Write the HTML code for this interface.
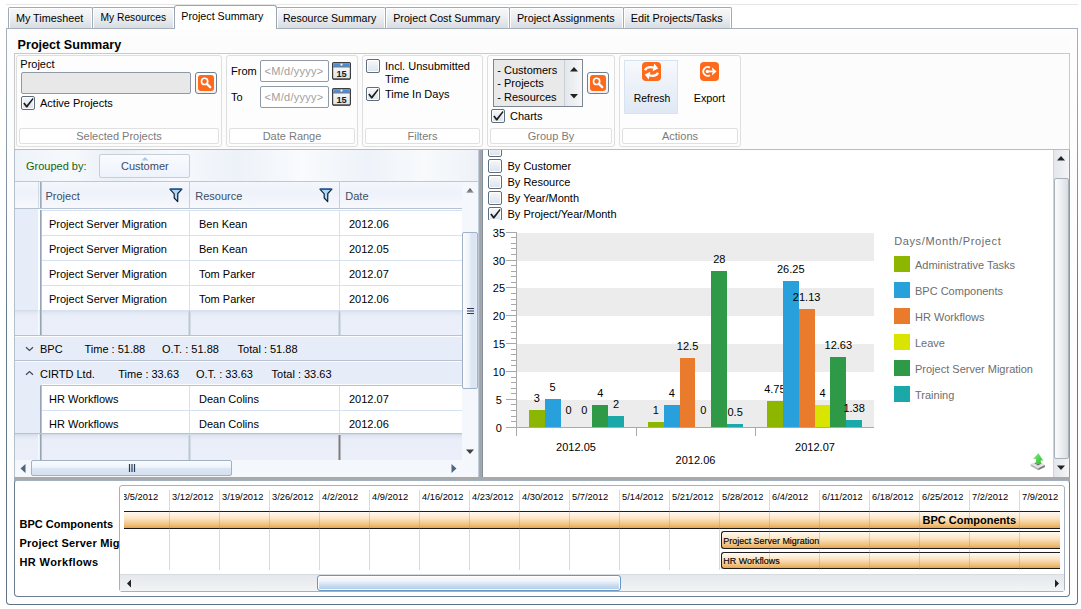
<!DOCTYPE html>
<html><head><meta charset="utf-8">
<style>
html,body{margin:0;padding:0;}
body{width:1081px;height:609px;overflow:hidden;background:#fff;position:relative;font-family:"Liberation Sans",sans-serif;font-size:11px;}
.a{position:absolute;box-sizing:border-box;}
.t{white-space:nowrap;}
</style></head><body>
<div class="a " style="left:6px;top:4px;width:1072px;height:1px;background:#e6e6e6;"></div>
<div class="a " style="left:6px;top:28px;width:1072px;height:577px;border-radius:0 0 4px 4px;background:linear-gradient(#a8b2bc,#8d9bab 20%,#65788a 50%,#5f7384);"></div>
<div class="a " style="left:7px;top:29px;width:1070px;height:575px;border-radius:0 0 3px 3px;background:#fdfdfd;"></div>
<div class="a " style="left:14px;top:36px;width:1056px;height:113px;background:#fcfcfc;"></div>
<div class="a " style="left:8px;top:7px;width:85px;height:22px;border:1px solid #a0aab4;border-bottom:none;border-radius:2px 2px 0 0;background:linear-gradient(#f7f8f9,#eceef1 45%,#d6dbe1);box-shadow:inset 1px 1px 0 #fff,inset -1px 0 0 #fff;"></div>
<div class="a t " style="left:15.90px;top:12.84px;font-size:10.82px;line-height:10.82px;color:#000;font-weight:normal;">My Timesheet</div>
<div class="a " style="left:92px;top:7px;width:83px;height:22px;border:1px solid #a0aab4;border-bottom:none;border-radius:2px 2px 0 0;background:linear-gradient(#f7f8f9,#eceef1 45%,#d6dbe1);box-shadow:inset 1px 1px 0 #fff,inset -1px 0 0 #fff;"></div>
<div class="a t " style="left:100.50px;top:13.31px;font-size:10.26px;line-height:10.26px;color:#000;font-weight:normal;">My Resources</div>
<div class="a " style="left:276px;top:7px;width:110px;height:22px;border:1px solid #a0aab4;border-bottom:none;border-radius:2px 2px 0 0;background:linear-gradient(#f7f8f9,#eceef1 45%,#d6dbe1);box-shadow:inset 1px 1px 0 #fff,inset -1px 0 0 #fff;"></div>
<div class="a t " style="left:282.90px;top:13.05px;font-size:10.57px;line-height:10.57px;color:#000;font-weight:normal;">Resource Summary</div>
<div class="a " style="left:385px;top:7px;width:125px;height:22px;border:1px solid #a0aab4;border-bottom:none;border-radius:2px 2px 0 0;background:linear-gradient(#f7f8f9,#eceef1 45%,#d6dbe1);box-shadow:inset 1px 1px 0 #fff,inset -1px 0 0 #fff;"></div>
<div class="a t " style="left:393.20px;top:12.95px;font-size:10.69px;line-height:10.69px;color:#000;font-weight:normal;">Project Cost Summary</div>
<div class="a " style="left:509px;top:7px;width:115px;height:22px;border:1px solid #a0aab4;border-bottom:none;border-radius:2px 2px 0 0;background:linear-gradient(#f7f8f9,#eceef1 45%,#d6dbe1);box-shadow:inset 1px 1px 0 #fff,inset -1px 0 0 #fff;"></div>
<div class="a t " style="left:516.90px;top:12.87px;font-size:10.79px;line-height:10.79px;color:#000;font-weight:normal;">Project Assignments</div>
<div class="a " style="left:623px;top:7px;width:109px;height:22px;border:1px solid #a0aab4;border-bottom:none;border-radius:2px 2px 0 0;background:linear-gradient(#f7f8f9,#eceef1 45%,#d6dbe1);box-shadow:inset 1px 1px 0 #fff,inset -1px 0 0 #fff;"></div>
<div class="a t " style="left:630.80px;top:12.78px;font-size:10.89px;line-height:10.89px;color:#000;font-weight:normal;">Edit Projects/Tasks</div>
<div class="a " style="left:174px;top:5px;width:103px;height:24px;border:1px solid #9aa5b1;border-bottom:none;border-radius:3px 3px 0 0;background:#fff;"></div>
<div class="a t " style="left:181.30px;top:10.93px;font-size:10.71px;line-height:10.71px;color:#000;font-weight:normal;">Project Summary</div>
<div class="a " style="left:6px;top:28px;width:1072px;height:1px;background:#a6b0ba;"></div>
<div class="a " style="left:175px;top:28px;width:101px;height:1px;background:#fff;"></div>
<div class="a t " style="left:17.60px;top:38.73px;font-size:12.6px;line-height:12.6px;color:#000;font-weight:bold;">Project Summary</div>
<div class="a " style="left:14px;top:53px;width:1056px;height:96px;border:1px solid #c9c9c9;border-bottom:none;background:#fcfcfc;"></div>
<div class="a " style="left:16px;top:55px;width:206px;height:92px;border:1px solid #dedede;border-radius:3px;background:#fdfdfd;"></div>
<div class="a " style="left:19px;top:128px;width:200px;height:16px;border:1px solid #e0e0e0;border-radius:2px;background:#fff;"></div>
<div class="a t" style="left:19.00px;width:200px;text-align:center;top:130.69px;font-size:11px;line-height:11px;color:#7b7b7b;font-weight:normal;">Selected Projects</div>
<div class="a " style="left:226px;top:55px;width:132px;height:92px;border:1px solid #dedede;border-radius:3px;background:#fdfdfd;"></div>
<div class="a " style="left:229px;top:128px;width:126px;height:16px;border:1px solid #e0e0e0;border-radius:2px;background:#fff;"></div>
<div class="a t" style="left:192.00px;width:200px;text-align:center;top:130.69px;font-size:11px;line-height:11px;color:#7b7b7b;font-weight:normal;">Date Range</div>
<div class="a " style="left:362px;top:55px;width:121px;height:92px;border:1px solid #dedede;border-radius:3px;background:#fdfdfd;"></div>
<div class="a " style="left:365px;top:128px;width:115px;height:16px;border:1px solid #e0e0e0;border-radius:2px;background:#fff;"></div>
<div class="a t" style="left:322.50px;width:200px;text-align:center;top:130.69px;font-size:11px;line-height:11px;color:#7b7b7b;font-weight:normal;">Filters</div>
<div class="a " style="left:487px;top:55px;width:128px;height:92px;border:1px solid #dedede;border-radius:3px;background:#fdfdfd;"></div>
<div class="a " style="left:490px;top:128px;width:122px;height:16px;border:1px solid #e0e0e0;border-radius:2px;background:#fff;"></div>
<div class="a t" style="left:451.00px;width:200px;text-align:center;top:130.69px;font-size:11px;line-height:11px;color:#7b7b7b;font-weight:normal;">Group By</div>
<div class="a " style="left:619px;top:55px;width:122px;height:92px;border:1px solid #dedede;border-radius:3px;background:#fdfdfd;"></div>
<div class="a " style="left:622px;top:128px;width:116px;height:16px;border:1px solid #e0e0e0;border-radius:2px;background:#fff;"></div>
<div class="a t" style="left:580.00px;width:200px;text-align:center;top:130.69px;font-size:11px;line-height:11px;color:#7b7b7b;font-weight:normal;">Actions</div>
<div class="a t " style="left:20.30px;top:59.29px;font-size:11px;line-height:11px;color:#000;font-weight:normal;">Project</div>
<div class="a " style="left:21px;top:72px;width:170px;height:22px;border:1px solid #8e9aa8;border-radius:2px;background:#e8e8e8;"></div>
<div class="a " style="left:195px;top:72px;width:22px;height:22px;border:1px solid #6e7f90;border-radius:3px;background:linear-gradient(#fff,#eef1f4);"><svg width="16" height="16" style="position:absolute;left:2px;top:2px"><rect x="0" y="0" width="16" height="16" rx="3" fill="#fd6a1c"/><circle cx="6.6" cy="6.4" r="3.1" fill="none" stroke="#fff" stroke-width="1.6"/><path d="M8.8 8.7 L12.2 12.1" stroke="#fff" stroke-width="2.3" stroke-linecap="round"/></svg></div>
<div class="a " style="left:21px;top:96px;width:14px;height:14px;border:1px solid #5f6d7c;border-radius:2px;background:linear-gradient(#f6f8fa,#dbe3ec);box-shadow:inset 0 0 0 1px #fff;"><svg width="14" height="14" style="position:absolute;left:-1px;top:-1px"><path d="M2.2 7.6 L3.6 6.6 L5.7 9.2 L11.6 2.1 L12.6 2.9 L6.3 11.4 L5.2 11.4Z" fill="#1e1e1e"/></svg></div>
<div class="a t " style="left:40.00px;top:97.69px;font-size:11px;line-height:11px;color:#000;font-weight:normal;">Active Projects</div>
<div class="a t " style="left:231.00px;top:66.19px;font-size:11px;line-height:11px;color:#000;font-weight:normal;">From</div>
<div class="a t " style="left:231.00px;top:91.69px;font-size:11px;line-height:11px;color:#000;font-weight:normal;">To</div>
<div class="a " style="left:260px;top:60px;width:69px;height:22px;border:1px solid #8e9aa8;border-radius:2px;background:#fff;"></div>
<div class="a t " style="left:264.50px;top:66.19px;font-size:11px;line-height:11px;color:#a0a0a0;font-weight:normal;letter-spacing:0.28px;">&lt;M/d/yyyy&gt;</div>
<div class="a " style="left:332px;top:62px;width:19px;height:18px;"><svg width="19" height="18" style="position:absolute;left:0;top:0"><defs><linearGradient id="cg" x1="0" y1="0" x2="0" y2="1"><stop offset="0" stop-color="#fff"/><stop offset="1" stop-color="#dfe3e8"/></linearGradient></defs><rect x="0.6" y="0.6" width="17.8" height="16.4" rx="1" fill="url(#cg)" stroke="#3d3d3d" stroke-width="1.2"/><rect x="1.2" y="1.2" width="16.6" height="3.6" fill="#4d8fd6"/><rect x="1" y="4.6" width="17" height="0.8" fill="#555"/><circle cx="9.5" cy="2.6" r="1.1" fill="#fff"/><path d="M1 17.2 H18" stroke="#333" stroke-width="1"/><text x="9.6" y="14.9" font-size="9.2" font-weight="bold" font-family="Liberation Sans" text-anchor="middle" fill="#1a1a1a">15</text></svg></div>
<div class="a " style="left:260px;top:86px;width:69px;height:22px;border:1px solid #8e9aa8;border-radius:2px;background:#fff;"></div>
<div class="a t " style="left:264.50px;top:92.19px;font-size:11px;line-height:11px;color:#a0a0a0;font-weight:normal;letter-spacing:0.28px;">&lt;M/d/yyyy&gt;</div>
<div class="a " style="left:332px;top:88px;width:19px;height:18px;"><svg width="19" height="18" style="position:absolute;left:0;top:0"><defs><linearGradient id="cg" x1="0" y1="0" x2="0" y2="1"><stop offset="0" stop-color="#fff"/><stop offset="1" stop-color="#dfe3e8"/></linearGradient></defs><rect x="0.6" y="0.6" width="17.8" height="16.4" rx="1" fill="url(#cg)" stroke="#3d3d3d" stroke-width="1.2"/><rect x="1.2" y="1.2" width="16.6" height="3.6" fill="#4d8fd6"/><rect x="1" y="4.6" width="17" height="0.8" fill="#555"/><circle cx="9.5" cy="2.6" r="1.1" fill="#fff"/><path d="M1 17.2 H18" stroke="#333" stroke-width="1"/><text x="9.6" y="14.9" font-size="9.2" font-weight="bold" font-family="Liberation Sans" text-anchor="middle" fill="#1a1a1a">15</text></svg></div>
<div class="a " style="left:366px;top:59px;width:14px;height:14px;border:1px solid #5f6d7c;border-radius:2px;background:linear-gradient(#f6f8fa,#dbe3ec);box-shadow:inset 0 0 0 1px #fff;"></div>
<div class="a t " style="left:385.00px;top:60.69px;font-size:11px;line-height:11px;color:#000;font-weight:normal;">Incl. Unsubmitted</div>
<div class="a t " style="left:385.00px;top:74.29px;font-size:11px;line-height:11px;color:#000;font-weight:normal;">Time</div>
<div class="a " style="left:366px;top:87px;width:14px;height:14px;border:1px solid #5f6d7c;border-radius:2px;background:linear-gradient(#f6f8fa,#dbe3ec);box-shadow:inset 0 0 0 1px #fff;"><svg width="14" height="14" style="position:absolute;left:-1px;top:-1px"><path d="M2.2 7.6 L3.6 6.6 L5.7 9.2 L11.6 2.1 L12.6 2.9 L6.3 11.4 L5.2 11.4Z" fill="#1e1e1e"/></svg></div>
<div class="a t " style="left:385.00px;top:88.69px;font-size:11px;line-height:11px;color:#000;font-weight:normal;">Time In Days</div>
<div class="a " style="left:493px;top:59px;width:90px;height:48px;border:1px solid #7d8793;background:#e9e9e9;"></div>
<div class="a " style="left:564px;top:60px;width:18px;height:46px;background:linear-gradient(90deg,#e3e7ec,#f6f7f9);border-left:1px solid #c8ced6;"><svg width="18" height="46" style="position:absolute;left:0;top:0"><path d="M5 11.5 L9 7 L13 11.5Z" fill="#222"/><path d="M5 34 L9 38.5 L13 34Z" fill="#222"/></svg></div>
<div class="a t " style="left:497.30px;top:65.09px;font-size:11px;line-height:11px;color:#000;font-weight:normal;">- Customers</div>
<div class="a t " style="left:497.30px;top:77.99px;font-size:11px;line-height:11px;color:#000;font-weight:normal;">- Projects</div>
<div class="a t " style="left:497.30px;top:91.69px;font-size:11px;line-height:11px;color:#000;font-weight:normal;">- Resources</div>
<div class="a " style="left:587px;top:72px;width:22px;height:22px;border:1px solid #6e7f90;border-radius:3px;background:linear-gradient(#fff,#eef1f4);"><svg width="16" height="16" style="position:absolute;left:2px;top:2px"><rect x="0" y="0" width="16" height="16" rx="3" fill="#fd6a1c"/><circle cx="6.6" cy="6.4" r="3.1" fill="none" stroke="#fff" stroke-width="1.6"/><path d="M8.8 8.7 L12.2 12.1" stroke="#fff" stroke-width="2.3" stroke-linecap="round"/></svg></div>
<div class="a " style="left:491px;top:109px;width:14px;height:14px;border:1px solid #5f6d7c;border-radius:2px;background:linear-gradient(#f6f8fa,#dbe3ec);box-shadow:inset 0 0 0 1px #fff;"><svg width="14" height="14" style="position:absolute;left:-1px;top:-1px"><path d="M2.2 7.6 L3.6 6.6 L5.7 9.2 L11.6 2.1 L12.6 2.9 L6.3 11.4 L5.2 11.4Z" fill="#1e1e1e"/></svg></div>
<div class="a t " style="left:510.00px;top:111.19px;font-size:11px;line-height:11px;color:#000;font-weight:normal;">Charts</div>
<div class="a " style="left:624px;top:60px;width:54px;height:54px;border:1px solid #d9e3ef;background:linear-gradient(#f7f9fc,#dfe8f4);"></div>
<div class="a " style="left:642px;top:62px;width:19px;height:19px;"><svg width="19" height="19" style="position:absolute;left:0;top:0"><rect width="19" height="19" rx="4" fill="#fd6a1c"/><g id="ra"><path d="M3 8.3 C4.2 5.6 7.5 4.6 11.8 5.6" fill="none" stroke="#fff" stroke-width="2.3"/><path d="M12.3 1.6 L16.2 6.6 L10.6 9.3Z" fill="#fff"/></g><g transform="rotate(180 9.5 9.5)"><path d="M3 8.3 C4.2 5.6 7.5 4.6 11.8 5.6" fill="none" stroke="#fff" stroke-width="2.3"/><path d="M12.3 1.6 L16.2 6.6 L10.6 9.3Z" fill="#fff"/></g></svg></div>
<div class="a t " style="left:633.80px;top:93.70px;font-size:10.4px;line-height:10.4px;color:#000;font-weight:normal;">Refresh</div>
<div class="a " style="left:700px;top:62px;width:19px;height:19px;"><svg width="19" height="19" style="position:absolute;left:0;top:0"><rect width="19" height="19" rx="4" fill="#fd6a1c"/><path d="M9.9 5.6 A4.4 4.4 0 1 0 9.9 13.2" fill="none" stroke="#fff" stroke-width="1.8"/><circle cx="7.3" cy="9.4" r="1.7" fill="#fff"/><path d="M7 9.4 L14 9.4" stroke="#fff" stroke-width="1.8"/><path d="M11.8 5.3 L16.6 9.4 L11.8 13.6 L12.8 9.4Z" fill="#fff"/></svg></div>
<div class="a t " style="left:693.70px;top:93.36px;font-size:10.8px;line-height:10.8px;color:#000;font-weight:normal;">Export</div>
<div class="a " style="left:14px;top:149px;width:1056px;height:1px;background:#b9bdc2;"></div>
<div class="a " style="left:14px;top:150px;width:464px;height:327px;border-left:1px solid #b4c0cc;background:#fff;"></div>
<div class="a " style="left:15px;top:150px;width:463px;height:32px;background:linear-gradient(90deg,#eef3fa,#f6f9fc 12%,#eaf0f8 22%,#f7f9fc 34%,#edf2f9 48%,#f9fbfd 62%,#eef3f9 76%,#f8fafc 88%,#eef2f8);border-bottom:1px solid #bcc8d6;"></div>
<div class="a t " style="left:26.00px;top:160.69px;font-size:11px;line-height:11px;color:#136410;font-weight:normal;">Grouped by:</div>
<div class="a " style="left:99px;top:154px;width:91px;height:24px;border:1px solid #c5cfda;border-radius:2px;background:linear-gradient(#f9fbff,#eef2fb);"><svg width="10" height="5" style="position:absolute;left:40px;top:1px"><path d="M1.5 4.5 L5 1 L8.5 4.5Z" fill="#a9c8ee"/></svg></div>
<div class="a t " style="left:121.00px;top:160.69px;font-size:11px;line-height:11px;color:#3c4b60;font-weight:normal;">Customer</div>
<div class="a " style="left:15px;top:182px;width:447px;height:27px;background:linear-gradient(#f4f7fc,#eef2fa 40%,#f6f8fc);border-bottom:1px solid #b6c2d0;"></div>
<div class="a " style="left:15px;top:182px;width:24px;height:26px;border-right:1px solid #d2dbe6;"></div>
<div class="a " style="left:40px;top:182px;width:2px;height:26px;background:linear-gradient(90deg,#8e9cac,#c9d2dc);"></div>
<div class="a " style="left:189px;top:182px;width:1px;height:26px;background:#c4cfdb;"></div>
<div class="a " style="left:339px;top:182px;width:1px;height:26px;background:#c4cfdb;"></div>
<div class="a t " style="left:45.50px;top:190.69px;font-size:11px;line-height:11px;color:#3d4d63;font-weight:normal;">Project</div>
<div class="a t " style="left:195.30px;top:190.69px;font-size:11px;line-height:11px;color:#3d4d63;font-weight:normal;">Resource</div>
<div class="a t " style="left:345.30px;top:190.69px;font-size:11px;line-height:11px;color:#3d4d63;font-weight:normal;">Date</div>
<div class="a " style="left:168px;top:187px;width:16px;height:17px;"><svg width="16" height="17" style="position:absolute;left:0;top:0"><path d="M1.9 2.2 L13.9 2.2 L9.8 6.5 L9.7 14.6 L6.2 11 L6.2 6.8Z" fill="#aed8f4" stroke="#0f1f36" stroke-width="1.2" stroke-linejoin="round"/><path d="M2.2 2.2 L13.6 2.2" stroke="#1a5fb4" stroke-width="1.3"/></svg></div>
<div class="a " style="left:318px;top:187px;width:16px;height:17px;"><svg width="16" height="17" style="position:absolute;left:0;top:0"><path d="M1.9 2.2 L13.9 2.2 L9.8 6.5 L9.7 14.6 L6.2 11 L6.2 6.8Z" fill="#aed8f4" stroke="#0f1f36" stroke-width="1.2" stroke-linejoin="round"/><path d="M2.2 2.2 L13.6 2.2" stroke="#1a5fb4" stroke-width="1.3"/></svg></div>
<div class="a " style="left:15px;top:209px;width:24px;height:126px;background:#e7edf8;border-right:1px solid #fbfcfe;"></div>
<div class="a " style="left:15px;top:361px;width:24px;height:99px;background:#e7edf8;border-right:1px solid #fbfcfe;"></div>
<div class="a " style="left:42px;top:209px;width:420px;height:1px;background:#fff;"></div>
<div class="a " style="left:42px;top:210px;width:420px;height:25px;background:#fff;"></div>
<div class="a " style="left:42px;top:210px;width:420px;height:1px;background:#d6e2f2;"></div>
<div class="a " style="left:189px;top:210px;width:1px;height:25px;background:#d6e2f2;"></div>
<div class="a " style="left:339px;top:210px;width:1px;height:25px;background:#d6e2f2;"></div>
<div class="a t " style="left:49.00px;top:218.69px;font-size:11px;line-height:11px;color:#000;font-weight:normal;">Project Server Migration</div>
<div class="a t " style="left:199.00px;top:218.69px;font-size:11px;line-height:11px;color:#000;font-weight:normal;">Ben Kean</div>
<div class="a t " style="left:349.00px;top:218.69px;font-size:11px;line-height:11px;color:#000;font-weight:normal;">2012.06</div>
<div class="a " style="left:42px;top:235px;width:420px;height:25px;background:#fff;"></div>
<div class="a " style="left:42px;top:235px;width:420px;height:1px;background:#d6e2f2;"></div>
<div class="a " style="left:189px;top:235px;width:1px;height:25px;background:#d6e2f2;"></div>
<div class="a " style="left:339px;top:235px;width:1px;height:25px;background:#d6e2f2;"></div>
<div class="a t " style="left:49.00px;top:243.69px;font-size:11px;line-height:11px;color:#000;font-weight:normal;">Project Server Migration</div>
<div class="a t " style="left:199.00px;top:243.69px;font-size:11px;line-height:11px;color:#000;font-weight:normal;">Ben Kean</div>
<div class="a t " style="left:349.00px;top:243.69px;font-size:11px;line-height:11px;color:#000;font-weight:normal;">2012.05</div>
<div class="a " style="left:42px;top:260px;width:420px;height:25px;background:#fff;"></div>
<div class="a " style="left:42px;top:260px;width:420px;height:1px;background:#d6e2f2;"></div>
<div class="a " style="left:189px;top:260px;width:1px;height:25px;background:#d6e2f2;"></div>
<div class="a " style="left:339px;top:260px;width:1px;height:25px;background:#d6e2f2;"></div>
<div class="a t " style="left:49.00px;top:268.69px;font-size:11px;line-height:11px;color:#000;font-weight:normal;">Project Server Migration</div>
<div class="a t " style="left:199.00px;top:268.69px;font-size:11px;line-height:11px;color:#000;font-weight:normal;">Tom Parker</div>
<div class="a t " style="left:349.00px;top:268.69px;font-size:11px;line-height:11px;color:#000;font-weight:normal;">2012.07</div>
<div class="a " style="left:42px;top:285px;width:420px;height:25px;background:#fff;"></div>
<div class="a " style="left:42px;top:285px;width:420px;height:1px;background:#d6e2f2;"></div>
<div class="a " style="left:189px;top:285px;width:1px;height:25px;background:#d6e2f2;"></div>
<div class="a " style="left:339px;top:285px;width:1px;height:25px;background:#d6e2f2;"></div>
<div class="a t " style="left:49.00px;top:293.69px;font-size:11px;line-height:11px;color:#000;font-weight:normal;">Project Server Migration</div>
<div class="a t " style="left:199.00px;top:293.69px;font-size:11px;line-height:11px;color:#000;font-weight:normal;">Tom Parker</div>
<div class="a t " style="left:349.00px;top:293.69px;font-size:11px;line-height:11px;color:#000;font-weight:normal;">2012.06</div>
<div class="a " style="left:40px;top:210px;width:2px;height:100px;background:linear-gradient(90deg,#8797a9,#c5cfda);"></div>
<div class="a " style="left:15px;top:310px;width:447px;height:25px;background:linear-gradient(#d2dcea,#e3e9f4 3px,#e9eef8 6px,#eaeff9);"></div>
<div class="a " style="left:42px;top:310px;width:420px;height:1px;background:#d6e2f2;"></div>
<div class="a " style="left:15px;top:310px;width:24px;height:25px;background:linear-gradient(#d2dcea,#e3e9f4 3px,#e9eef8 6px,#eaeff9);border-right:1px solid #f6f8fc;"></div>
<div class="a " style="left:40px;top:310px;width:2px;height:25px;background:linear-gradient(90deg,#8797a9,#c5cfda);"></div>
<div class="a " style="left:188px;top:311px;width:3px;height:24px;background:linear-gradient(90deg,#eef2f9,#b9c5d3 33%,#b9c5d3 66%,#eef2f9);"></div>
<div class="a " style="left:338px;top:311px;width:3px;height:24px;background:linear-gradient(90deg,#eef2f9,#b9c5d3 33%,#b9c5d3 66%,#eef2f9);"></div>
<div class="a " style="left:15px;top:335px;width:447px;height:1px;background:#b6c2d0;"></div>
<div class="a " style="left:15px;top:336px;width:447px;height:24px;background:#e7edf8;border-top:1px solid #fbfcfe;"></div>
<div class="a " style="left:15px;top:360px;width:447px;height:1px;background:#b6c2d0;"></div>
<svg class="a" style="left:25px;top:346px" width="9" height="6"><path d="M1 1.2 L4.5 4.5 L8 1.2" fill="none" stroke="#3a4a5e" stroke-width="1.2"/></svg>
<div class="a t " style="left:40.00px;top:343.69px;font-size:11px;line-height:11px;color:#000;font-weight:normal;">BPC</div>
<div class="a t " style="left:84.50px;top:343.69px;font-size:11px;line-height:11px;color:#000;font-weight:normal;">Time : 51.88</div>
<div class="a t " style="left:162.00px;top:343.69px;font-size:11px;line-height:11px;color:#000;font-weight:normal;">O.T. : 51.88</div>
<div class="a t " style="left:237.60px;top:343.69px;font-size:11px;line-height:11px;color:#000;font-weight:normal;">Total : 51.88</div>
<div class="a " style="left:15px;top:361px;width:447px;height:73px;background:#e7edf8;border-top:1px solid #fbfcfe;"></div>
<svg class="a" style="left:25px;top:370px" width="9" height="6"><path d="M1 4.8 L4.5 1.5 L8 4.8" fill="none" stroke="#3a4a5e" stroke-width="1.2"/></svg>
<div class="a t " style="left:40.00px;top:368.69px;font-size:11px;line-height:11px;color:#000;font-weight:normal;">CIRTD Ltd.</div>
<div class="a t " style="left:118.30px;top:368.69px;font-size:11px;line-height:11px;color:#000;font-weight:normal;">Time : 33.63</div>
<div class="a t " style="left:196.00px;top:368.69px;font-size:11px;line-height:11px;color:#000;font-weight:normal;">O.T. : 33.63</div>
<div class="a t " style="left:271.60px;top:368.69px;font-size:11px;line-height:11px;color:#000;font-weight:normal;">Total : 33.63</div>
<div class="a " style="left:42px;top:384px;width:420px;height:1px;background:#fbfcfe;"></div>
<div class="a " style="left:42px;top:385px;width:420px;height:25px;background:#fff;"></div>
<div class="a " style="left:42px;top:385px;width:420px;height:1px;background:#d6e2f2;"></div>
<div class="a " style="left:189px;top:385px;width:1px;height:25px;background:#d6e2f2;"></div>
<div class="a " style="left:339px;top:385px;width:1px;height:25px;background:#d6e2f2;"></div>
<div class="a t " style="left:49.00px;top:393.69px;font-size:11px;line-height:11px;color:#000;font-weight:normal;">HR Workflows</div>
<div class="a t " style="left:199.00px;top:393.69px;font-size:11px;line-height:11px;color:#000;font-weight:normal;">Dean Colins</div>
<div class="a t " style="left:349.00px;top:393.69px;font-size:11px;line-height:11px;color:#000;font-weight:normal;">2012.07</div>
<div class="a " style="left:42px;top:410px;width:420px;height:23px;background:#fff;"></div>
<div class="a " style="left:42px;top:410px;width:420px;height:1px;background:#d6e2f2;"></div>
<div class="a " style="left:189px;top:410px;width:1px;height:23px;background:#d6e2f2;"></div>
<div class="a " style="left:339px;top:410px;width:1px;height:23px;background:#d6e2f2;"></div>
<div class="a t " style="left:49.00px;top:418.69px;font-size:11px;line-height:11px;color:#000;font-weight:normal;">HR Workflows</div>
<div class="a t " style="left:199.00px;top:418.69px;font-size:11px;line-height:11px;color:#000;font-weight:normal;">Dean Colins</div>
<div class="a t " style="left:349.00px;top:418.69px;font-size:11px;line-height:11px;color:#000;font-weight:normal;">2012.06</div>
<div class="a " style="left:40px;top:385px;width:2px;height:48px;background:linear-gradient(90deg,#8797a9,#c5cfda);"></div>
<div class="a " style="left:40px;top:385px;width:422px;height:1px;background:#b6c2d0;"></div>
<div class="a " style="left:15px;top:433px;width:447px;height:1px;background:#b6c2d0;"></div>
<div class="a " style="left:15px;top:434px;width:447px;height:26px;background:linear-gradient(#d2dcea,#e3e9f4 3px,#e9eef8 6px,#eaeff9);"></div>
<div class="a " style="left:42px;top:434px;width:420px;height:1px;background:#d6e2f2;"></div>
<div class="a " style="left:15px;top:434px;width:24px;height:26px;background:linear-gradient(#d2dcea,#e3e9f4 3px,#e9eef8 6px,#eaeff9);border-right:1px solid #f6f8fc;"></div>
<div class="a " style="left:40px;top:434px;width:2px;height:26px;background:linear-gradient(90deg,#8797a9,#c5cfda);"></div>
<div class="a " style="left:188px;top:435px;width:3px;height:25px;background:linear-gradient(90deg,#eef2f9,#b9c5d3 33%,#b9c5d3 66%,#eef2f9);"></div>
<div class="a " style="left:338px;top:435px;width:3px;height:25px;background:linear-gradient(90deg,#eef2f9,#7c7c7c 33%,#7c7c7c 66%,#eef2f9);"></div>
<div class="a " style="left:42px;top:434px;width:420px;height:1px;background:#d2dcea;"></div>
<div class="a " style="left:462px;top:182px;width:16px;height:278px;background:#f4f7fb;"></div>
<div class="a " style="left:462px;top:232px;width:16px;height:157px;border:1px solid #9fb0c8;border-radius:2px;background:linear-gradient(90deg,#fbfcfe,#eef2f8 45%,#dce6f3 60%,#dce6f3 92%,#e6eefa);"><svg width="14" height="8" style="position:absolute;left:3px;top:74px"><path d="M1 1.5 H8 M1 4 H8 M1 6.5 H8" stroke="#283c58" stroke-width="1.2"/></svg></div>
<svg class="a" style="left:464px;top:186px" width="12" height="8"><defs><linearGradient id="ag" x1="0" y1="0" x2="0" y2="1"><stop offset="0" stop-color="#4a4a4a"/><stop offset="1" stop-color="#9a9a9a"/></linearGradient></defs><path d="M2.2 6.8 L6 2 L9.8 6.8Z" fill="url(#ag)"/></svg>
<svg class="a" style="left:464px;top:448px" width="12" height="8"><path d="M2 1.5 L6 6 L10 1.5Z" fill="#404040"/></svg>
<div class="a " style="left:15px;top:460px;width:464px;height:17px;background:#f4f7fb;"></div>
<div class="a " style="left:31px;top:460px;width:201px;height:16px;border:1px solid #9fb0c8;border-radius:2px;background:linear-gradient(#fbfcfe,#eef3f9 45%,#dbe5f2 55%,#d6e1ef);"><svg width="8" height="9" style="position:absolute;left:96px;top:3px"><path d="M1.5 0 V8 M4 0 V8 M6.5 0 V8" stroke="#283c58" stroke-width="1.2"/></svg></div>
<svg class="a" style="left:19px;top:463px" width="8" height="11"><path d="M6.5 1 L1.5 5.5 L6.5 10Z" fill="#4f6580"/></svg>
<svg class="a" style="left:450px;top:463px" width="8" height="11"><path d="M1.5 1 L6.5 5.5 L1.5 10Z" fill="#4f6580"/></svg>
<div class="a " style="left:478px;top:150px;width:1px;height:327px;background:#c2cad8;"></div>
<div class="a " style="left:479px;top:150px;width:1px;height:327px;background:#78bcd4;"></div>
<div class="a " style="left:480px;top:150px;width:1px;height:327px;background:#a4a4a8;"></div>
<div class="a " style="left:481px;top:150px;width:1px;height:327px;background:#70bcd0;"></div>
<div class="a " style="left:482px;top:150px;width:1px;height:327px;background:#8090a0;"></div>
<div class="a " style="left:14px;top:477px;width:1056px;height:4px;background:#a9a9a9;"></div>
<div class="a " style="left:483px;top:150px;width:587px;height:327px;background:#fff;"></div>
<div class="a " style="left:1053px;top:150px;width:17px;height:327px;background:linear-gradient(90deg,#e3e6ea,#f3f5f7);border-left:1px solid #cfd4da;border-right:1px solid #8f9aa6;"></div>
<div class="a " style="left:1054px;top:178px;width:15px;height:281px;border:1px solid #a8b0ba;border-radius:2px;background:linear-gradient(90deg,#fbfbfc,#eceef1 50%,#d9dde2);"></div>
<svg class="a" style="left:1055px;top:154px" width="12" height="8"><path d="M2 6.5 L6 2 L10 6.5Z" fill="#222"/></svg>
<svg class="a" style="left:1055px;top:464px" width="12" height="8"><path d="M2 1.5 L6 6 L10 1.5Z" fill="#222"/></svg>
<div class="a" style="left:484px;top:150px;width:569px;height:70px;overflow:hidden;">
<div class="a " style="left:4.00px;top:-7.00px;width:14px;height:14px;border:1px solid #5f6d7c;border-radius:2px;background:linear-gradient(#f6f8fa,#dbe3ec);box-shadow:inset 0 0 0 1px #fff;"></div>
<div class="a " style="left:4.00px;top:9.00px;width:14px;height:14px;border:1px solid #5f6d7c;border-radius:2px;background:linear-gradient(#f6f8fa,#dbe3ec);box-shadow:inset 0 0 0 1px #fff;"></div>
<div class="a t " style="left:23.50px;top:10.69px;font-size:11px;line-height:11px;color:#000;font-weight:normal;">By Customer</div>
<div class="a " style="left:4.00px;top:25.00px;width:14px;height:14px;border:1px solid #5f6d7c;border-radius:2px;background:linear-gradient(#f6f8fa,#dbe3ec);box-shadow:inset 0 0 0 1px #fff;"></div>
<div class="a t " style="left:23.50px;top:26.69px;font-size:11px;line-height:11px;color:#000;font-weight:normal;">By Resource</div>
<div class="a " style="left:4.00px;top:41.00px;width:14px;height:14px;border:1px solid #5f6d7c;border-radius:2px;background:linear-gradient(#f6f8fa,#dbe3ec);box-shadow:inset 0 0 0 1px #fff;"></div>
<div class="a t " style="left:23.50px;top:42.69px;font-size:11px;line-height:11px;color:#000;font-weight:normal;">By Year/Month</div>
<div class="a " style="left:4.00px;top:57.00px;width:14px;height:14px;border:1px solid #5f6d7c;border-radius:2px;background:linear-gradient(#f6f8fa,#dbe3ec);box-shadow:inset 0 0 0 1px #fff;"><svg width="14" height="14" style="position:absolute;left:-1px;top:-1px"><path d="M2.2 7.6 L3.6 6.6 L5.7 9.2 L11.6 2.1 L12.6 2.9 L6.3 11.4 L5.2 11.4Z" fill="#1e1e1e"/></svg></div>
<div class="a t " style="left:23.50px;top:58.69px;font-size:11px;line-height:11px;color:#000;font-weight:normal;">By Project/Year/Month</div>
</div>
<div class="a t " style="left:510.00px;top:146.69px;font-size:11px;line-height:11px;color:#000;font-weight:normal;"></div>
<div class="a " style="left:517px;top:400px;width:357px;height:27px;background:#ececec;"></div>
<div class="a " style="left:517px;top:344px;width:357px;height:28px;background:#ececec;"></div>
<div class="a " style="left:517px;top:288px;width:357px;height:28px;background:#ececec;"></div>
<div class="a " style="left:517px;top:233px;width:357px;height:28px;background:#ececec;"></div>
<div class="a " style="left:516px;top:232px;width:1px;height:204px;background:#a9a9a9;"></div>
<div class="a " style="left:506px;top:427px;width:368px;height:1px;background:#a9a9a9;"></div>
<div class="a " style="left:506px;top:427px;width:10px;height:1px;background:#a9a9a9;"></div>
<div class="a t" style="left:398.90px;width:200px;text-align:center;top:422.69px;font-size:11px;line-height:11px;color:#000;font-weight:normal;">0</div>
<div class="a " style="left:511px;top:421px;width:5px;height:1px;background:#a9a9a9;"></div>
<div class="a " style="left:511px;top:416px;width:5px;height:1px;background:#a9a9a9;"></div>
<div class="a " style="left:511px;top:410px;width:5px;height:1px;background:#a9a9a9;"></div>
<div class="a " style="left:511px;top:404px;width:5px;height:1px;background:#a9a9a9;"></div>
<div class="a " style="left:506px;top:399px;width:10px;height:1px;background:#a9a9a9;"></div>
<div class="a t" style="left:398.90px;width:200px;text-align:center;top:394.69px;font-size:11px;line-height:11px;color:#000;font-weight:normal;">5</div>
<div class="a " style="left:511px;top:393px;width:5px;height:1px;background:#a9a9a9;"></div>
<div class="a " style="left:511px;top:388px;width:5px;height:1px;background:#a9a9a9;"></div>
<div class="a " style="left:511px;top:382px;width:5px;height:1px;background:#a9a9a9;"></div>
<div class="a " style="left:511px;top:377px;width:5px;height:1px;background:#a9a9a9;"></div>
<div class="a " style="left:506px;top:371px;width:10px;height:1px;background:#a9a9a9;"></div>
<div class="a t" style="left:398.90px;width:200px;text-align:center;top:366.69px;font-size:11px;line-height:11px;color:#000;font-weight:normal;">10</div>
<div class="a " style="left:511px;top:365px;width:5px;height:1px;background:#a9a9a9;"></div>
<div class="a " style="left:511px;top:360px;width:5px;height:1px;background:#a9a9a9;"></div>
<div class="a " style="left:511px;top:354px;width:5px;height:1px;background:#a9a9a9;"></div>
<div class="a " style="left:511px;top:349px;width:5px;height:1px;background:#a9a9a9;"></div>
<div class="a " style="left:506px;top:343px;width:10px;height:1px;background:#a9a9a9;"></div>
<div class="a t" style="left:398.90px;width:200px;text-align:center;top:338.69px;font-size:11px;line-height:11px;color:#000;font-weight:normal;">15</div>
<div class="a " style="left:511px;top:338px;width:5px;height:1px;background:#a9a9a9;"></div>
<div class="a " style="left:511px;top:332px;width:5px;height:1px;background:#a9a9a9;"></div>
<div class="a " style="left:511px;top:326px;width:5px;height:1px;background:#a9a9a9;"></div>
<div class="a " style="left:511px;top:321px;width:5px;height:1px;background:#a9a9a9;"></div>
<div class="a " style="left:506px;top:315px;width:10px;height:1px;background:#a9a9a9;"></div>
<div class="a t" style="left:398.90px;width:200px;text-align:center;top:310.69px;font-size:11px;line-height:11px;color:#000;font-weight:normal;">20</div>
<div class="a " style="left:511px;top:310px;width:5px;height:1px;background:#a9a9a9;"></div>
<div class="a " style="left:511px;top:304px;width:5px;height:1px;background:#a9a9a9;"></div>
<div class="a " style="left:511px;top:299px;width:5px;height:1px;background:#a9a9a9;"></div>
<div class="a " style="left:511px;top:293px;width:5px;height:1px;background:#a9a9a9;"></div>
<div class="a " style="left:506px;top:287px;width:10px;height:1px;background:#a9a9a9;"></div>
<div class="a t" style="left:398.90px;width:200px;text-align:center;top:282.69px;font-size:11px;line-height:11px;color:#000;font-weight:normal;">25</div>
<div class="a " style="left:511px;top:282px;width:5px;height:1px;background:#a9a9a9;"></div>
<div class="a " style="left:511px;top:276px;width:5px;height:1px;background:#a9a9a9;"></div>
<div class="a " style="left:511px;top:271px;width:5px;height:1px;background:#a9a9a9;"></div>
<div class="a " style="left:511px;top:265px;width:5px;height:1px;background:#a9a9a9;"></div>
<div class="a " style="left:506px;top:260px;width:10px;height:1px;background:#a9a9a9;"></div>
<div class="a t" style="left:398.90px;width:200px;text-align:center;top:255.69px;font-size:11px;line-height:11px;color:#000;font-weight:normal;">30</div>
<div class="a " style="left:511px;top:254px;width:5px;height:1px;background:#a9a9a9;"></div>
<div class="a " style="left:511px;top:248px;width:5px;height:1px;background:#a9a9a9;"></div>
<div class="a " style="left:511px;top:243px;width:5px;height:1px;background:#a9a9a9;"></div>
<div class="a " style="left:511px;top:237px;width:5px;height:1px;background:#a9a9a9;"></div>
<div class="a " style="left:506px;top:232px;width:10px;height:1px;background:#a9a9a9;"></div>
<div class="a t" style="left:398.90px;width:200px;text-align:center;top:227.69px;font-size:11px;line-height:11px;color:#000;font-weight:normal;">35</div>
<div class="a " style="left:636px;top:427px;width:1px;height:9px;background:#a9a9a9;"></div>
<div class="a " style="left:755px;top:427px;width:1px;height:9px;background:#a9a9a9;"></div>
<div class="a" style="left:528.90px;top:410.49px;width:15.85px;height:16.71px;background:#8db600;"></div>
<div class="a t" style="left:436.82px;width:200px;text-align:center;top:392.69px;font-size:11px;line-height:11px;color:#000;font-weight:normal;">3</div>
<div class="a" style="left:544.75px;top:399.34px;width:15.85px;height:27.86px;background:#27a0db;"></div>
<div class="a t" style="left:452.67px;width:200px;text-align:center;top:381.69px;font-size:11px;line-height:11px;color:#000;font-weight:normal;">5</div>
<div class="a t" style="left:468.52px;width:200px;text-align:center;top:404.69px;font-size:11px;line-height:11px;color:#000;font-weight:normal;">0</div>
<div class="a t" style="left:484.37px;width:200px;text-align:center;top:404.69px;font-size:11px;line-height:11px;color:#000;font-weight:normal;">0</div>
<div class="a" style="left:592.30px;top:404.92px;width:15.85px;height:22.28px;background:#2e9a48;"></div>
<div class="a t" style="left:500.22px;width:200px;text-align:center;top:387.69px;font-size:11px;line-height:11px;color:#000;font-weight:normal;">4</div>
<div class="a" style="left:608.15px;top:416.06px;width:15.85px;height:11.14px;background:#1aa8a8;"></div>
<div class="a t" style="left:516.07px;width:200px;text-align:center;top:398.69px;font-size:11px;line-height:11px;color:#000;font-weight:normal;">2</div>
<div class="a" style="left:647.95px;top:421.63px;width:15.85px;height:5.57px;background:#8db600;"></div>
<div class="a t" style="left:555.87px;width:200px;text-align:center;top:404.69px;font-size:11px;line-height:11px;color:#000;font-weight:normal;">1</div>
<div class="a" style="left:663.80px;top:404.92px;width:15.85px;height:22.28px;background:#27a0db;"></div>
<div class="a t" style="left:571.72px;width:200px;text-align:center;top:387.69px;font-size:11px;line-height:11px;color:#000;font-weight:normal;">4</div>
<div class="a" style="left:679.65px;top:357.56px;width:15.85px;height:69.64px;background:#ea7a2c;"></div>
<div class="a t" style="left:587.57px;width:200px;text-align:center;top:340.69px;font-size:11px;line-height:11px;color:#000;font-weight:normal;">12.5</div>
<div class="a t" style="left:603.42px;width:200px;text-align:center;top:404.69px;font-size:11px;line-height:11px;color:#000;font-weight:normal;">0</div>
<div class="a" style="left:711.35px;top:271.21px;width:15.85px;height:155.99px;background:#2e9a48;"></div>
<div class="a t" style="left:619.27px;width:200px;text-align:center;top:253.69px;font-size:11px;line-height:11px;color:#000;font-weight:normal;">28</div>
<div class="a" style="left:727.20px;top:424.41px;width:15.85px;height:2.79px;background:#1aa8a8;"></div>
<div class="a t" style="left:635.12px;width:200px;text-align:center;top:406.69px;font-size:11px;line-height:11px;color:#000;font-weight:normal;">0.5</div>
<div class="a" style="left:767.00px;top:400.74px;width:15.85px;height:26.46px;background:#8db600;"></div>
<div class="a t" style="left:674.92px;width:200px;text-align:center;top:383.69px;font-size:11px;line-height:11px;color:#000;font-weight:normal;">4.75</div>
<div class="a" style="left:782.85px;top:280.96px;width:15.85px;height:146.24px;background:#27a0db;"></div>
<div class="a t" style="left:690.77px;width:200px;text-align:center;top:263.69px;font-size:11px;line-height:11px;color:#000;font-weight:normal;">26.25</div>
<div class="a" style="left:798.70px;top:309.48px;width:15.85px;height:117.72px;background:#ea7a2c;"></div>
<div class="a t" style="left:706.62px;width:200px;text-align:center;top:291.69px;font-size:11px;line-height:11px;color:#000;font-weight:normal;">21.13</div>
<div class="a" style="left:814.55px;top:404.92px;width:15.85px;height:22.28px;background:#d9e400;"></div>
<div class="a t" style="left:722.47px;width:200px;text-align:center;top:387.69px;font-size:11px;line-height:11px;color:#000;font-weight:normal;">4</div>
<div class="a" style="left:830.40px;top:356.84px;width:15.85px;height:70.36px;background:#2e9a48;"></div>
<div class="a t" style="left:738.32px;width:200px;text-align:center;top:339.69px;font-size:11px;line-height:11px;color:#000;font-weight:normal;">12.63</div>
<div class="a" style="left:846.25px;top:419.51px;width:15.85px;height:7.69px;background:#1aa8a8;"></div>
<div class="a t" style="left:754.17px;width:200px;text-align:center;top:402.69px;font-size:11px;line-height:11px;color:#000;font-weight:normal;">1.38</div>
<div class="a t" style="left:476.00px;width:200px;text-align:center;top:441.69px;font-size:11px;line-height:11px;color:#000;font-weight:normal;">2012.05</div>
<div class="a t" style="left:595.50px;width:200px;text-align:center;top:454.69px;font-size:11px;line-height:11px;color:#000;font-weight:normal;">2012.06</div>
<div class="a t" style="left:715.00px;width:200px;text-align:center;top:441.69px;font-size:11px;line-height:11px;color:#000;font-weight:normal;">2012.07</div>
<div class="a t " style="left:894.20px;top:235.69px;font-size:11px;line-height:11px;color:#6b6b6b;font-weight:normal;letter-spacing:0.62px;">Days/Month/Project</div>
<div class="a " style="left:894px;top:256px;width:16px;height:16px;background:#8db600;"></div>
<div class="a t " style="left:915.00px;top:259.89px;font-size:11px;line-height:11px;color:#6e6e6e;font-weight:normal;">Administrative Tasks</div>
<div class="a " style="left:894px;top:282px;width:16px;height:16px;background:#27a0db;"></div>
<div class="a t " style="left:915.00px;top:285.89px;font-size:11px;line-height:11px;color:#6e6e6e;font-weight:normal;">BPC Components</div>
<div class="a " style="left:894px;top:308px;width:16px;height:16px;background:#ea7a2c;"></div>
<div class="a t " style="left:915.00px;top:311.89px;font-size:11px;line-height:11px;color:#6e6e6e;font-weight:normal;">HR Workflows</div>
<div class="a " style="left:894px;top:334px;width:16px;height:16px;background:#d9e400;"></div>
<div class="a t " style="left:915.00px;top:337.89px;font-size:11px;line-height:11px;color:#6e6e6e;font-weight:normal;">Leave</div>
<div class="a " style="left:894px;top:360px;width:16px;height:16px;background:#2e9a48;"></div>
<div class="a t " style="left:915.00px;top:363.89px;font-size:11px;line-height:11px;color:#6e6e6e;font-weight:normal;">Project Server Migration</div>
<div class="a " style="left:894px;top:386px;width:16px;height:16px;background:#1aa8a8;"></div>
<div class="a t " style="left:915.00px;top:389.89px;font-size:11px;line-height:11px;color:#6e6e6e;font-weight:normal;">Training</div>
<svg class="a" style="left:1026px;top:448px" width="24" height="26"><defs><linearGradient id="gg" x1="0" y1="0" x2="1" y2="1"><stop offset="0" stop-color="#7cf07c"/><stop offset="1" stop-color="#2cb82c"/></linearGradient></defs><path d="M4.6 15.9 L12.4 12.6 L18.9 16.9 L12.3 20.2Z" fill="#e2e2e2"/><path d="M4.6 15.9 L12.3 20.2 L12.3 22.2 L4.6 18.1Z" fill="#b4b4b4"/><path d="M12.3 20.2 L18.9 16.9 L18.9 19.0 L12.3 22.2Z" fill="#777"/><path d="M8.6 15.2 L12.2 13.6 L15.6 15.6 L12 17.4Z" fill="#6a6a6a"/><path d="M12.4 5.2 L17.3 12.7 L14.8 12.2 L14.8 16 L10.2 16.2 L9.9 10.7 L7.1 10.9Z" fill="url(#gg)"/></svg>
<div class="a " style="left:14px;top:480px;width:1056px;height:117px;border:1px solid #6c7e8e;border-top-color:#a3b0bd;border-radius:3px 3px 4px 4px;background:#fff;"></div>
<div class="a" style="left:15px;top:500px;width:104px;height:80px;overflow:hidden;">
<div class="a t" style="left:4.5px;top:19.19px;font-size:11px;line-height:11px;font-weight:bold;letter-spacing:0px;">BPC Components</div>
<div class="a t" style="left:4.5px;top:38.29px;font-size:11px;line-height:11px;font-weight:bold;letter-spacing:0.2px;">Project Server Migration</div>
<div class="a t" style="left:4.5px;top:57.09px;font-size:11px;line-height:11px;font-weight:bold;letter-spacing:0.38px;">HR Workflows</div>
</div>
<div class="a " style="left:119px;top:485px;width:946px;height:107px;border:1px solid #a6b1bd;border-radius:3px;background:#fff;"></div>
<div class="a" style="left:124px;top:486px;width:940px;height:88px;overflow:hidden;">
<div class="a" style="left:0px;top:25px;width:936px;height:18px;border-top:1px solid #1e1e1e;border-bottom:1px solid #1a1a1a;background:linear-gradient(#fffaf3,#fbe5c4 40%,#f0c07c 80%,#e6a74c);"></div>
<div class="a" style="left:597px;top:45px;width:339px;height:18px;border:1px solid #1e1e1e;border-right:none;border-bottom:1.5px solid #1e1e1e;border-radius:3px 0 0 3px;background:linear-gradient(#fffaf3,#fbe5c4 40%,#f0c07c 80%,#e6a74c);"></div>
<div class="a" style="left:597px;top:66px;width:339px;height:17px;border:1px solid #1e1e1e;border-right:none;border-bottom:1.5px solid #1e1e1e;border-radius:3px 0 0 3px;background:linear-gradient(#fffaf3,#fbe5c4 40%,#f0c07c 80%,#e6a74c);"></div>
<div class="a t" style="left:-2.0px;top:6.53px;font-size:9.3px;line-height:9.3px;">3/5/2012</div>
<div class="a" style="left:45px;top:4px;width:1px;height:80px;background:rgba(150,150,150,0.35);"></div>
<div class="a t" style="left:48.0px;top:6.53px;font-size:9.3px;line-height:9.3px;">3/12/2012</div>
<div class="a" style="left:95px;top:4px;width:1px;height:80px;background:rgba(150,150,150,0.35);"></div>
<div class="a t" style="left:98.0px;top:6.53px;font-size:9.3px;line-height:9.3px;">3/19/2012</div>
<div class="a" style="left:145px;top:4px;width:1px;height:80px;background:rgba(150,150,150,0.35);"></div>
<div class="a t" style="left:148.0px;top:6.53px;font-size:9.3px;line-height:9.3px;">3/26/2012</div>
<div class="a" style="left:195px;top:4px;width:1px;height:80px;background:rgba(150,150,150,0.35);"></div>
<div class="a t" style="left:198.0px;top:6.53px;font-size:9.3px;line-height:9.3px;">4/2/2012</div>
<div class="a" style="left:245px;top:4px;width:1px;height:80px;background:rgba(150,150,150,0.35);"></div>
<div class="a t" style="left:248.0px;top:6.53px;font-size:9.3px;line-height:9.3px;">4/9/2012</div>
<div class="a" style="left:295px;top:4px;width:1px;height:80px;background:rgba(150,150,150,0.35);"></div>
<div class="a t" style="left:298.0px;top:6.53px;font-size:9.3px;line-height:9.3px;">4/16/2012</div>
<div class="a" style="left:345px;top:4px;width:1px;height:80px;background:rgba(150,150,150,0.35);"></div>
<div class="a t" style="left:348.0px;top:6.53px;font-size:9.3px;line-height:9.3px;">4/23/2012</div>
<div class="a" style="left:395px;top:4px;width:1px;height:80px;background:rgba(150,150,150,0.35);"></div>
<div class="a t" style="left:398.0px;top:6.53px;font-size:9.3px;line-height:9.3px;">4/30/2012</div>
<div class="a" style="left:445px;top:4px;width:1px;height:80px;background:rgba(150,150,150,0.35);"></div>
<div class="a t" style="left:448.0px;top:6.53px;font-size:9.3px;line-height:9.3px;">5/7/2012</div>
<div class="a" style="left:495px;top:4px;width:1px;height:80px;background:rgba(150,150,150,0.35);"></div>
<div class="a t" style="left:498.0px;top:6.53px;font-size:9.3px;line-height:9.3px;">5/14/2012</div>
<div class="a" style="left:545px;top:4px;width:1px;height:80px;background:rgba(150,150,150,0.35);"></div>
<div class="a t" style="left:548.0px;top:6.53px;font-size:9.3px;line-height:9.3px;">5/21/2012</div>
<div class="a" style="left:595px;top:4px;width:1px;height:80px;background:rgba(150,150,150,0.35);"></div>
<div class="a t" style="left:598.0px;top:6.53px;font-size:9.3px;line-height:9.3px;">5/28/2012</div>
<div class="a" style="left:645px;top:4px;width:1px;height:80px;background:rgba(150,150,150,0.35);"></div>
<div class="a t" style="left:648.0px;top:6.53px;font-size:9.3px;line-height:9.3px;">6/4/2012</div>
<div class="a" style="left:695px;top:4px;width:1px;height:80px;background:rgba(150,150,150,0.35);"></div>
<div class="a t" style="left:698.0px;top:6.53px;font-size:9.3px;line-height:9.3px;">6/11/2012</div>
<div class="a" style="left:745px;top:4px;width:1px;height:80px;background:rgba(150,150,150,0.35);"></div>
<div class="a t" style="left:748.0px;top:6.53px;font-size:9.3px;line-height:9.3px;">6/18/2012</div>
<div class="a" style="left:795px;top:4px;width:1px;height:80px;background:rgba(150,150,150,0.35);"></div>
<div class="a t" style="left:798.0px;top:6.53px;font-size:9.3px;line-height:9.3px;">6/25/2012</div>
<div class="a" style="left:845px;top:4px;width:1px;height:80px;background:rgba(150,150,150,0.35);"></div>
<div class="a t" style="left:848.0px;top:6.53px;font-size:9.3px;line-height:9.3px;">7/2/2012</div>
<div class="a" style="left:895px;top:4px;width:1px;height:80px;background:rgba(150,150,150,0.35);"></div>
<div class="a t" style="left:898.0px;top:6.53px;font-size:9.3px;line-height:9.3px;">7/9/2012</div>
<div class="a t" style="left:798.6px;top:28.59px;font-size:11px;line-height:11px;font-weight:bold;">BPC Components</div>
<div class="a t" style="left:599.3px;top:50.82px;font-size:8.95px;line-height:8.95px;-webkit-text-stroke:0.15px #000;">Project Server Migration</div>
<div class="a t" style="left:599.3px;top:70.82px;font-size:8.95px;line-height:8.95px;-webkit-text-stroke:0.15px #000;">HR Workflows</div>
</div>
<div class="a " style="left:120px;top:574px;width:944px;height:17px;background:linear-gradient(#e4e8ec,#f2f4f6);border-top:1px solid #d6dbe0;"></div>
<div class="a " style="left:317px;top:575px;width:304px;height:16px;border:1px solid #6497c6;border-radius:3px;background:linear-gradient(#fbfdfe,#eef4fa 35%,#c8dbef 70%,#acc9e7);box-shadow:inset 0 0 0 1px #fff;"></div>
<svg class="a" style="left:125px;top:578px" width="8" height="11"><path d="M6 1.5 L2 5.5 L6 9.5Z" fill="#222"/></svg>
<svg class="a" style="left:1053px;top:578px" width="8" height="11"><path d="M2 1.5 L6 5.5 L2 9.5Z" fill="#222"/></svg>
</body></html>
